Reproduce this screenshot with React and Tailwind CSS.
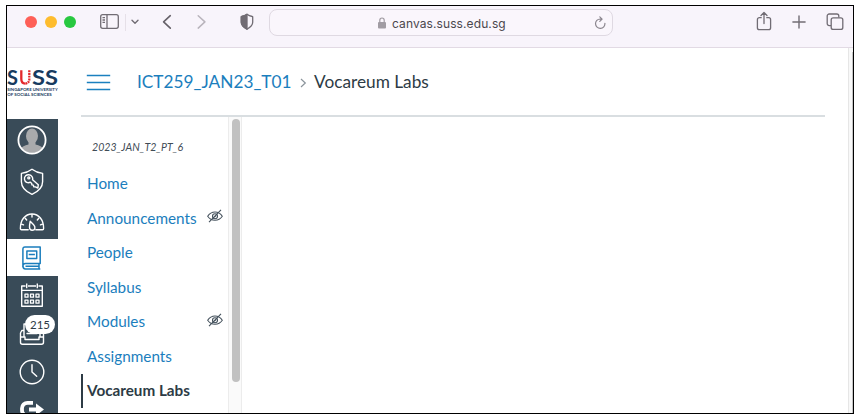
const links = [
  { label: "Home" },
  { label: "Announcements", hidden: true },
  { label: "People" },
  { label: "Syllabus" },
  { label: "Modules", hidden: true },
  { label: "Assignments" },
  { label: "Vocareum Labs", active: true },
];

function HiddenEye() {
  return (
    <svg width="16" height="14" viewBox="0 0 16 14" fill="none" stroke="#44515c" strokeWidth="1.1" className="-mt-1">
      <path d="M.7 7.3C2.5 4.400 5 3 8 3s5.500 1.400 7.300 4.300C13.500 10 11 11.300 8 11.300S2.500 10 .7 7.300Z" />
      <circle cx="8" cy="7.200" r="2.500" />
      <path d="M14 .8 2 13.200M9.200 6.300 7.200 8.400" />
    </svg>
  );
}

function Toolbar() {
  return (
    <div className="flex h-[42px] shrink-0 items-start border-b border-[#e2dae4] bg-[#f8f4fb]">
      <div className="ml-[18px] mt-[10px] flex gap-[7.500px]">
        <span className="size-[12px] rounded-full bg-[#fe5f57]" />
        <span className="size-[12px] rounded-full bg-[#febc2e]" />
        <span className="size-[12px] rounded-full bg-[#28c840]" />
      </div>
      <svg className="ml-[23px] mt-[7px]" width="21" height="18" viewBox="0 0 21 18" fill="none" stroke="#716c74" strokeWidth="1.300">
        <rect x="1.700" y="1.700" width="17.600" height="13.600" rx="2" />
        <path d="M8 2v13M3.500 4.700h2.500M3.500 7h2.500M3.500 9.300h2.500" />
      </svg>
      <span className="ml-[5px] mt-[8px] h-[17px] w-px bg-[#e6e0e8]" />
      <svg className="ml-[5px] mt-[13px]" width="8" height="6" viewBox="0 0 8 6" fill="none" stroke="#716c74" strokeWidth="1.400" strokeLinecap="round" strokeLinejoin="round">
        <path d="m1 1.200 3 3 3-3" />
      </svg>
      <svg className="ml-[23px] mt-[8px]" width="10" height="16" viewBox="0 0 10 16" fill="none" stroke="#666169" strokeWidth="1.600" strokeLinecap="round" strokeLinejoin="round">
        <path d="M8.300 1.700 1.600 7.900l6.700 6.200" />
      </svg>
      <svg className="ml-[25px] mt-[8px]" width="10" height="16" viewBox="0 0 10 16" fill="none" stroke="#b9b4bc" strokeWidth="1.500" strokeLinecap="round" strokeLinejoin="round">
        <path d="m1.200 1.700 6.700 6.200-6.700 6.200" />
      </svg>
      <svg className="ml-[33px] mt-[7px]" width="14" height="18" viewBox="0 0 14 18" fill="none" stroke="#716c74" strokeWidth="1.300" strokeLinejoin="round">
        <path d="M7 1.300c1.600 1.200 3.400 1.800 5.300 2.200.3 0 .4.200.4.500v5.300c0 3.200-3 5.400-5.700 6.900C4.300 14.700 1.300 12.500 1.300 9.300V4c0-.3.100-.5.400-.5C3.600 3.100 5.400 2.500 7 1.300Z" />
        <path d="M7 1.300v14.900C4.300 14.700 1.300 12.500 1.300 9.300V4c0-.3.100-.5.400-.5C3.600 3.100 5.400 2.500 7 1.300Z" fill="#716c74" />
      </svg>
      <div className="ml-[15px] mt-[3px] flex h-[27px] w-[344px] items-center rounded-[8px] border border-[#dfd9e2] bg-[#faf6fc]">
        <svg className="ml-[108px]" width="8" height="12" viewBox="0 0 8 12">
          <rect x="0" y="5" width="8" height="6.500" rx="1" fill="#a19ca3" />
          <path d="M1.800 5.500V3.200a2.200 2.200 0 0 1 4.400 0v2.300" fill="none" stroke="#a19ca3" strokeWidth="1.200" />
        </svg>
        <span className="ml-[6px] mt-[2px] w-[116px] font-['Inter',sans-serif] text-[12px] leading-[16px] tracking-[0.100px] text-[#4b474d]">canvas.suss.edu.sg</span>
        <svg className="ml-[86px]" width="13" height="14" viewBox="0 0 13 14" fill="none" stroke="#8b868e" strokeWidth="1.200" strokeLinecap="round" strokeLinejoin="round">
          <path d="M10.900 7.300A4.700 4.700 0 1 1 6.200 3l1.500.1M5.800.8l2.300 2.300-2.300 2.300" />
        </svg>
      </div>
      <svg className="ml-[143px] mt-[5px]" width="16" height="20" viewBox="0 0 16 20" fill="none" stroke="#716c74" strokeWidth="1.300" strokeLinecap="round" strokeLinejoin="round">
        <path d="M5.200 6.700H3.400a2 2 0 0 0-2 2v8a2 2 0 0 0 2 2h9.200a2 2 0 0 0 2-2v-8a2 2 0 0 0-2-2h-1.800M8 12.500V1.800M5 4.500l3-3 3 3" />
      </svg>
      <svg className="ml-[20px] mt-[9px]" width="14" height="14" viewBox="0 0 14 14" stroke="#716c74" strokeWidth="1.400" strokeLinecap="round">
        <path d="M7 .9v12.200M.9 7h12.200" />
      </svg>
      <svg className="ml-[20px] mt-[7px]" width="18" height="18" viewBox="0 0 18 18" fill="none" stroke="#716c74" strokeWidth="1.300">
        <rect x="5.200" y="4.800" width="11.600" height="11.600" rx="2" />
        <path d="M5 12.600H3.200a2 2 0 0 1-2-2V3a2 2 0 0 1 2-2h7.600a2 2 0 0 1 2 2v1.600" />
      </svg>
    </div>
  );
}

function Logo() {
  return (
    <div className="h-[71px] shrink-0">
      <svg width="51" height="71" viewBox="7 48 51 71" className="font-['Lato',sans-serif]" fontWeight="700" fill="#173b60">
        <text x="7" y="84.500" fontSize="20" textLength="11" lengthAdjust="spacingAndGlyphs">S</text>
        <path d="M21.300 70.300v8.600c0 3 1.200 4.500 3.900 4.700" fill="none" stroke="#e3282b" strokeWidth="2.300" />
        <path d="M29.300 70.300v8.600c0 3-1.500 4.700-4.400 4.700" fill="none" stroke="#e3282b" strokeWidth="2.300" strokeDasharray="1.900 .8" />
        <text x="32" y="84.500" fontSize="20" textLength="26" lengthAdjust="spacingAndGlyphs">SS</text>
        <text x="7.200" y="91.400" fontSize="4.200" textLength="50.500" lengthAdjust="spacingAndGlyphs">SINGAPORE UNIVERSITY</text>
        <text x="7.200" y="96.300" fontSize="4.200" textLength="44.500" lengthAdjust="spacingAndGlyphs">OF SOCIAL SCIENCES</text>
      </svg>
    </div>
  );
}

function GlobalNav() {
  const line = { fill: "none", stroke: "#fff", strokeWidth: 1.400, strokeLinecap: "round", strokeLinejoin: "round" };
  return (
    <div className="flex w-[51px] shrink-0 flex-col">
      <Logo />
      <div className="flex min-h-0 flex-1 flex-col items-center overflow-hidden bg-[#394b58] pr-px">
        <div className="flex h-[42px] shrink-0 items-center">
          <svg width="30" height="30" viewBox="0 0 30 30">
            <clipPath id="face"><circle cx="15" cy="15" r="13" /></clipPath>
            <circle cx="15" cy="15" r="13.500" fill="#40505d" />
            <g clipPath="url(#face)" fill="#a9aaac">
              <ellipse cx="15" cy="11" rx="6" ry="7.500" />
              <path d="M11.500 16h7v3.500c4 1.200 6.500 2 8.500 5V30H3v-5.500c2-3 4.500-3.800 8.500-5Z" />
            </g>
            <circle cx="15" cy="15" r="13.600" fill="none" stroke="#fff" strokeWidth="1.800" />
          </svg>
        </div>
        <div className="flex h-[42px] shrink-0 items-center">
          <svg width="26" height="28" viewBox="0 0 26 28" {...line}>
            <path d="M13 1.300c3.400 2.600 6.600 3.700 10.600 4.100v8.300c0 6.300-4.800 10-10.600 12.600C7.200 23.700 2.400 20 2.400 13.700V5.400C6.400 5 9.600 3.900 13 1.300Z" />
            <path d="M10.200 6.800a4 4 0 1 0 1.200 7.400l1.300 1.200.2 1.500 1.500.2.300 1.600 1.600.2 2.600 1.100.4-3.300-5.700-4.900a4 4 0 0 0-3.400-5Z" />
            <circle cx="9.800" cy="9.900" r="1" />
          </svg>
        </div>
        <div className="flex h-[36px] shrink-0 items-center">
          <svg className="mt-[2px]" width="26" height="22" viewBox="0 0 26 22" {...line}>
            <path d="M9.200 18.700H2.500c-.8 0-1.100-.6-1.100-1.300C1.400 9 6 3 13 3s11.600 6 11.600 14.400c0 .7-.3 1.300-1.100 1.300h-6.700" />
            <path d="M13 3.500V6M6.200 7.200 7.700 9M19.800 7.200 18.300 9M2.500 13.200l2 .7M23.500 13.200l-2 .7" />
            <path d="M11.200 10.300c-.8 4.200-1.700 8.700 1.900 9 3.400.1 3.500-3.500 1.500-5.500Z" />
          </svg>
        </div>
        <div className="-mr-px flex h-[37px] w-[51px] shrink-0 items-center justify-center bg-white pr-px">
          <svg width="20" height="24" viewBox="0 0 20 24" fill="none" stroke="#1b7ebd" strokeWidth="1.500" strokeLinejoin="round">
            <path d="M3 1h15.200v16.500H3.400c-1.500 0-2.500 1-2.500 2.500V3.200C.9 1.800 1.600 1 3 1Z" />
            <path d="M17 17.500V23M.9 20c0 1.900.9 2.900 2.500 2.900h14.900M3.500 20.200H17M4.900 4.900h9.800v7.500H4.900ZM6.700 8.600h6.200" />
          </svg>
        </div>
        <div className="flex h-[38px] shrink-0 items-center">
          <svg width="24" height="26" viewBox="0 0 24 26" {...line} strokeLinecap="butt">
            <path d="M5.500 4H1.700v20.300h20.600V4h-3.800M8 4h8M1.700 8.400h20.600M6.700 1.500v4.700M17.300 1.500v4.700" />
            <path d="M5 12.200h3v3H5ZM10.500 12.200h3v3h-3ZM16 12.200h3v3h-3ZM5 18.200h3v3H5ZM10.500 18.200h3v3h-3ZM16 18.200h3v3h-3Z" strokeWidth="1.300" />
          </svg>
        </div>
        <div className="relative flex h-[38px] shrink-0 items-center">
          <svg width="26" height="24" viewBox="0 0 26 24" {...line}>
            <path d="M5 16V3h16v13M5 9.500H2.800L1.500 12v9.300a2 2 0 0 0 2 2h19a2 2 0 0 0 2-2V12l-1.300-2.500H21M8 8h10M8 12.500h10M1.500 16h4.500v2.500h14V16h4.500" />
          </svg>
          <span className="absolute -right-[10px] top-[1px] flex h-[19px] w-[30px] items-center justify-center rounded-full bg-white font-['Lato',sans-serif] text-[11.500px] text-[#2d3b45]">215</span>
        </div>
        <div className="flex h-[39px] shrink-0 items-center">
          <svg width="26" height="26" viewBox="0 0 26 26" {...line}>
            <circle cx="13" cy="13" r="11.800" />
            <path d="M13 5.700V13l4.700 4.300" />
          </svg>
        </div>
        <svg className="mt-[9px] shrink-0" width="26" height="20" viewBox="0 0 26 20" fill="none" stroke="#fff" strokeWidth="3.800">
          <path d="M14 2.800H8.500A5.500 5.500 0 0 0 3 8.300v2a5.500 5.500 0 0 0 5.500 5.500h5.500M10 9.500h9" />
          <path d="m17 3.500 8 6-8 6Z" fill="#fff" stroke="none" />
        </svg>
      </div>
    </div>
  );
}

export default function App() {
  return (
    <div className="h-[419px] w-[859px] overflow-hidden bg-white pl-[6px] pt-[5px] font-['Lato',sans-serif]">
      <div className="flex h-[409px] w-[848px] flex-col overflow-hidden border border-black">
        <Toolbar />
        <div className="flex min-h-0 flex-1">
          <GlobalNav />
          <main className="ml-[23px] flex w-[744px] flex-col">
            <header className="flex h-[69px] shrink-0 items-center border-b-2 border-[#d9dee1] text-[17.250px] leading-[24px]">
              <svg className="ml-[5px] mt-px" width="25" height="17" viewBox="0 0 25 17" stroke="#1b80bf" strokeWidth="1.300">
                <path d="M.8 1.500h23.400M.8 8.500h23.400M.8 15.500h23.400" />
              </svg>
              <a className="ml-[26px] mt-px w-[155px] whitespace-nowrap text-[#1b7ebd]">ICT259_JAN23_T01</a>
              <svg className="ml-[8px] mt-[3px]" width="7" height="10" viewBox="0 0 7 10" fill="none" stroke="#8b949b" strokeWidth="1.200">
                <path d="m1 1 4.300 4L1 9" />
              </svg>
              <span className="ml-[7px] mt-px whitespace-nowrap text-[#2d3b45]">Vocareum Labs</span>
            </header>
            <div className="flex min-h-0 flex-1">
              <nav className="w-[147px] shrink-0">
                <p className="ml-[11px] mt-[23px] h-[14px] whitespace-nowrap text-[10.600px] italic leading-[14px] text-[#3f4c56]">2023_JAN_T2_PT_6</p>
                <ul className="mt-[12.600px]">
                  {links.map(({ label, hidden, active }) => (
                    <li
                      key={label}
                      className={
                        active
                          ? "flex h-[34.500px] items-center border-l-2 border-[#2d3b45] pl-[4px] text-[15.250px] font-bold text-[#2d3b45]"
                          : "flex h-[34.500px] items-center justify-between pl-[6px] pr-[5px] text-[15.300px] text-[#1b7ebd]"
                      }
                    >
                      <span className="whitespace-nowrap">{label}</span>
                      {hidden && <HiddenEye />}
                    </li>
                  ))}
                </ul>
              </nav>
              <div className="w-[14px] shrink-0 border-x border-[#ececec] bg-[#fafafa] pl-[2.500px] pt-[2px]">
                <div className="h-[263px] w-[8px] rounded-full bg-[#c1c1c1]" />
              </div>
            </div>
          </main>
          <div className="ml-auto w-[5px] border-l border-[#e6e6e6] bg-[#f8f8f8] pt-[4px]">
            <div className="ml-auto h-full w-px bg-[#c4c4c4]" />
          </div>
        </div>
      </div>
    </div>
  );
}
